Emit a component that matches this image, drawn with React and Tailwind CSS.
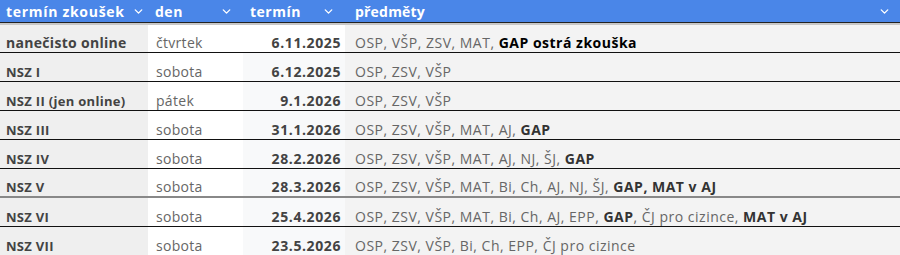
import { ChevronDown } from "lucide-react";

const B = ({ children, dark }) => (
  <b className={`font-bold ${dark ? "text-black" : "text-[#333]"}`}>{children}</b>
);

const rows = [
  { name: "nanečisto online", day: "čtvrtek", date: "6.11.2025", subj: <>OSP, VŠP, ZSV, MAT, <B dark>GAP ostrá zkouška</B></>, first: true },
  { name: "NSZ I", day: "sobota", date: "6.12.2025", subj: <>OSP, ZSV, VŠP</> },
  { name: "NSZ II (jen online)", day: "pátek", date: "9.1.2026", subj: <>OSP, ZSV, VŠP</> },
  { name: "NSZ III", day: "sobota", date: "31.1.2026", subj: <>OSP, ZSV, VŠP, MAT, AJ, <B>GAP</B></> },
  { name: "NSZ IV", day: "sobota", date: "28.2.2026", subj: <>OSP, ZSV, VŠP, MAT, AJ, NJ, ŠJ, <B>GAP</B></> },
  { name: "NSZ V", day: "sobota", date: "28.3.2026", subj: <>OSP, ZSV, VŠP, MAT, Bi, Ch, AJ, NJ, ŠJ, <B>GAP, MAT v AJ</B></>, gray: true },
  { name: "NSZ VI", day: "sobota", date: "25.4.2026", subj: <>OSP, ZSV, VŠP, MAT, Bi, Ch, AJ, EPP, <B>GAP</B>, ČJ pro cizince, <B>MAT v AJ</B></> },
  { name: "NSZ VII", day: "sobota", date: "23.5.2026", subj: <>OSP, ZSV, VŠP, Bi, Ch, EPP, ČJ pro cizince</>, last: true },
];

export default function App() {
  return (
    <div className="w-[900px] h-[255px] overflow-hidden bg-white font-['Open_Sans',sans-serif]">
      {/* header */}
      <div className="grid grid-cols-[148px_95px_102px_1fr] bg-[#4a86e8] text-white font-bold text-[14px] tracking-[0.5px] border-b border-[#222]">
        <div className="flex items-center h-[22px] pl-[6px] gap-[7px]">
          <span className="tracking-[0.7px]">termín zkoušek</span>
          <ChevronDown size={13} strokeWidth={2.5} />
        </div>
        <div className="flex items-center justify-between h-[22px] pl-[7px] pr-[10px]">
          <span>den</span>
          <ChevronDown size={13} strokeWidth={2.5} />
        </div>
        <div className="flex items-center justify-between h-[22px] pl-[7px] pr-[10px]">
          <span>termín</span>
          <ChevronDown size={13} strokeWidth={2.5} />
        </div>
        <div className="flex items-center justify-between h-[22px] pl-[10px] pr-[9px]">
          <span className="tracking-[0.2px]">předměty</span>
          <ChevronDown size={13} strokeWidth={2.5} />
        </div>
      </div>
      <div className="h-[2px] bg-[#c7c7c7]" />

      {rows.map((r, i) => (
        <div
          key={i}
          className={`grid grid-cols-[148px_95px_102px_1fr] leading-none ${r.first ? "h-[28px]" : "h-[29px]"} ${r.last ? "" : r.gray ? "border-b-2 border-[#888]" : "border-b border-[#111]"}`}
        >
          <div className={`bg-[#efefef] flex items-end ${r.last ? "pb-[3px]" : "pb-[2px]"} pl-[6px] font-bold text-[#434343] ${r.first ? "text-[14px] tracking-[0.3px]" : "text-[13px] tracking-[0.3px]"}`}>
            <span>{r.name}</span>
          </div>
          <div className={`bg-white flex items-end ${r.last ? "pb-[3px]" : "pb-[2px]"} pl-[8px] text-[14px] tracking-[0.3px] text-[#666]`}>
            <span>{r.day}</span>
          </div>
          <div className={`${r.first ? "bg-white" : "bg-[#f8f9fa]"} flex items-end justify-end ${r.last ? "pb-[3px]" : "pb-[2px]"} pr-[4px] text-[14px] tracking-[0.6px] font-bold text-[#434343]`}>
            <span>{r.date}</span>
          </div>
          <div className={`bg-[#f3f3f3] flex items-end ${r.last ? "pb-[3px]" : "pb-[2px]"} pl-[10px] text-[14px] tracking-[0.5px] text-[#666] whitespace-nowrap`}>
            <span>{r.subj}</span>
          </div>
        </div>
      ))}
    </div>
  );
}
